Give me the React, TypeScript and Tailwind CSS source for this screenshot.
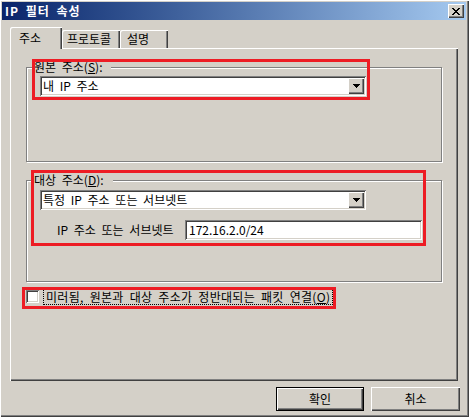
const raised =
  "shadow-[inset_1px_1px_#ffffff,inset_-1px_-1px_#404040,inset_-2px_-2px_#808080]";
const sunken =
  "shadow-[inset_1px_1px_#808080,inset_-1px_-1px_#ffffff,inset_2px_2px_#404040,inset_-2px_-2px_#d4d0c8]";

const ArrowDown = () => (
  <svg width="7" height="4" viewBox="0 0 7 4" shapeRendering="crispEdges">
    <path d="M0 0h7v1H0zM1 1h5v1H1zM2 2h3v1H2zM3 3h1v1H3z" fill="#000" />
  </svg>
);

const Combo = ({ value }: { value: string }) => (
  <div className={`flex h-[20px] w-[326px] items-center bg-white p-[2px] ${sunken}`}>
    <span className="flex-1 pl-[1px] leading-[14px]">{value}</span>
    <div className={`flex h-[16px] w-[16px] items-center justify-center bg-[#d4d0c8] ${raised}`}>
      <ArrowDown />
    </div>
  </div>
);

const Group = ({
  label,
  hotkey,
  className,
  children,
}: {
  label: string;
  hotkey: string;
  className: string;
  children: React.ReactNode;
}) => (
  <div
    className={`relative w-[416px] border border-[#808080] shadow-[inset_1px_1px_#ffffff,1px_1px_#ffffff] ${className}`}
  >
    <span className="absolute left-[5px] -top-[8px] bg-[#d4d0c8] pl-[2px] pr-[9px] leading-[14px]">
      {label}(<u>{hotkey}</u>):
    </span>
    {children}
  </div>
);

export default function App() {
  return (
    <div className="relative flex h-[417px] w-[469px] flex-col bg-[#d4d0c8] pl-[2px] pr-[3px] pt-[2px] font-[family-name:'Noto_Sans_CJK_KR','Noto_Sans',sans-serif] text-[12px] leading-[14px] text-black [word-spacing:3px] shadow-[inset_1px_1px_#ffffff,inset_-1px_-1px_#404040,inset_-2px_-2px_#808080]">
      {/* title bar */}
      <div className="flex h-[18px] items-center justify-between bg-linear-to-r from-[#0a246a] to-[#a6caf0] pl-[3px] pr-[2px]">
        <span className="font-bold tracking-[1px] text-white">IP 필터 속성</span>
        <div className={`flex h-[14px] w-[16px] items-center justify-center bg-[#d4d0c8] ${raised}`}>
          <svg width="8" height="7" viewBox="0 0 8 7" shapeRendering="crispEdges">
            <path
              d="M0 0h2v1H0zM6 0h2v1H6zM1 1h2v1H1zM5 1h2v1H5zM2 2h4v1H2zM3 3h2v1H3zM2 4h4v1H2zM1 5h2v1H1zM5 5h2v1H5zM0 6h2v1H0zM6 6h2v1H6z"
              fill="#000"
            />
          </svg>
        </div>
      </div>

      {/* tabs + panel */}
      <div className="ml-[8px] mt-[7px] flex flex-col">
        <div className="flex h-[21px] items-end">
          <div className="relative z-10 -mb-[1px] h-[22px] w-[52px] rounded-tl-[2px] bg-[#d4d0c8] pl-[9px] pt-[4px] shadow-[inset_1px_1px_#ffffff,inset_-1px_0_#404040,inset_-2px_0_#808080]">
            주소
          </div>
          <div className="h-[18px] w-[58px] rounded-tl-[2px] pl-[5px] pt-[2px] shadow-[inset_1px_1px_#ffffff,inset_-1px_0_#404040,inset_-2px_0_#808080]">
            프로토콜
          </div>
          <div className="h-[18px] w-[48px] rounded-tl-[2px] pl-[7px] pt-[2px] shadow-[inset_1px_1px_#ffffff,inset_-1px_0_#404040,inset_-2px_0_#808080]">
            설명
          </div>
        </div>

        <div className="flex h-[333px] w-[448px] flex-col pl-[16px] pt-[19px] shadow-[inset_1px_1px_#ffffff,inset_-1px_-1px_#404040,inset_-2px_-2px_#808080]">
          <Group label="원본 주소" hotkey="S" className="h-[95px] pl-[13px] pt-[8px]">
            <Combo value="내 IP 주소" />
          </Group>

          <Group label="대상 주소" hotkey="D" className="mt-[18px] h-[102px] pl-[13px] pt-[9px]">
            <Combo value="특정 IP 주소 또는 서브넷트" />
            <div className="mt-[10px] flex items-center pl-[17px]">
              <span className="w-[128px]">IP 주소 또는 서브넷트</span>
              <div className={`flex h-[20px] w-[237px] items-center bg-white pl-[4px] ${sunken}`}>
                172.16.2.0/24
              </div>
            </div>
          </Group>

          <div className="mt-[6px] flex items-center">
            <div className={`h-[13px] w-[13px] bg-white ${sunken}`} />
            <span className="ml-[4px] border border-dotted border-black px-[2px] leading-[15px] tracking-[0.3px]">
              미러됨, 원본과 대상 주소가 정반대되는 패킷 연결(<u>O</u>)
            </span>
          </div>
        </div>
      </div>

      {/* buttons */}
      <div className="mt-[6px] flex justify-end gap-[7px] pr-[6px]">
        <button className="flex h-[24px] w-[88px] items-center justify-center border border-black bg-[#d4d0c8] shadow-[inset_1px_1px_#ffffff,inset_-1px_-1px_#404040,inset_-2px_-2px_#808080]">
          확인
        </button>
        <button className={`flex h-[24px] w-[89px] items-center justify-center bg-[#d4d0c8] ${raised}`}>
          취소
        </button>
      </div>

      {/* red annotation boxes */}
      <div className="absolute left-[32px] top-[59px] h-[41px] w-[338px] border-[3px] border-[#ed1c24]" />
      <div className="absolute left-[31px] top-[170px] h-[76px] w-[395px] border-[3px] border-[#ed1c24]" />
      <div className="absolute left-[22px] top-[287px] h-[22px] w-[314px] border-[3px] border-[#ed1c24]" />
    </div>
  );
}
